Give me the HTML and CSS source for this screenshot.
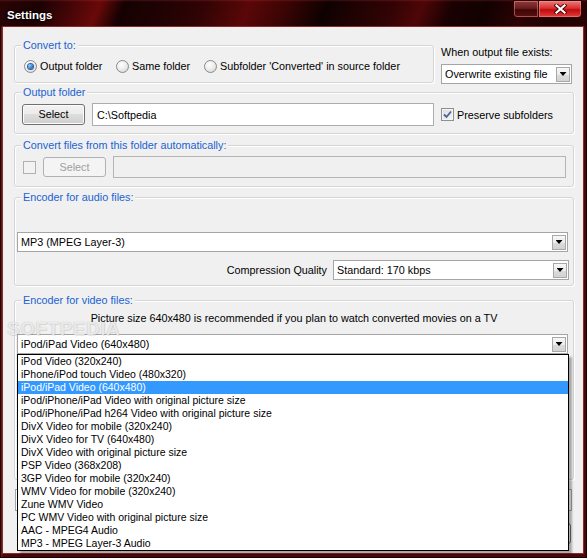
FILE: index.html
```html
<!DOCTYPE html>
<html>
<head>
<meta charset="utf-8">
<title>Settings</title>
<link rel="stylesheet" href="styles.css">
</head>
<body>
<div class="window">
  <div class="titlebar">
    <span class="title">Settings</span>
    <div class="caption-btns">
      <span class="cbtn cbtn-dark"></span>
      <span class="cbtn cbtn-close">
        <svg width="13" height="10" viewBox="0 0 13 10">
          <path d="M2.5 1.5 L10.5 8.5 M10.5 1.5 L2.5 8.5" stroke="#4a0000" stroke-width="4" stroke-linecap="square"/>
          <path d="M2.5 1.5 L10.5 8.5 M10.5 1.5 L2.5 8.5" stroke="#ffffff" stroke-width="2.2" stroke-linecap="square"/>
        </svg>
      </span>
    </div>
  </div>
  <div class="client">
    <div class="row1">
      <div class="group g1">
        <div class="gtitle">Convert to:</div>
        <div class="radios">
          <label class="ritem r1"><span class="radio on"></span>Output folder</label>
          <label class="ritem r2"><span class="radio"></span>Same folder</label>
          <label class="ritem"><span class="radio"></span>Subfolder 'Converted' in source folder</label>
        </div>
      </div>
      <div class="exists">
        <div class="lbl">When output file exists:</div>
        <div class="combo combo-exists"><span class="ctext">Overwrite existing file</span><span class="dd"><i class="tri"></i></span></div>
      </div>
    </div>

    <div class="group g2">
      <div class="gtitle">Output folder</div>
      <div class="frow frow2">
        <span class="btn btn-sel">Select</span>
        <span class="tb tb-out">C:\Softpedia</span>
        <span class="chk on"><svg width="9" height="9" viewBox="0 0 9 9"><path d="M1 4.5 L3.5 7 L8 1.5" fill="none" stroke="#4b6396" stroke-width="1.8"/></svg></span>
        <span class="chk-lbl">Preserve subfolders</span>
      </div>
    </div>

    <div class="group g3">
      <div class="gtitle">Convert files from this folder automatically:</div>
      <div class="frow frow3">
        <span class="chk dis"></span>
        <span class="btn btn-dis">Select</span>
        <span class="tb tb-dis"></span>
      </div>
    </div>

    <div class="group g4">
      <div class="gtitle">Encoder for audio files:</div>
      <div class="combo combo-wide combo-mp3"><span class="ctext">MP3 (MPEG Layer-3)</span><span class="dd"><i class="tri"></i></span></div>
      <div class="qrow">
        <span class="qlbl">Compression Quality</span>
        <div class="combo combo-q"><span class="ctext">Standard: 170 kbps</span><span class="dd"><i class="tri"></i></span></div>
      </div>
    </div>

    <div class="group g5">
      <div class="gtitle">Encoder for video files:</div>
      <div class="desc">Picture size 640x480 is recommended if you plan to watch converted movies on a TV</div>
      <div class="combo combo-wide combo-video"><span class="ctext">iPod/iPad Video (640x480)</span><span class="dd"><i class="tri"></i></span></div>
    </div>

    <div class="combo hidden-combo"><span class="ctext"></span></div>
    <div class="bottom-row">
      <span class="lang-edge"></span>
      <span class="btn btn-ok"></span>
    </div>

    <div class="watermark">SOFTPEDIA</div>

    <ul class="dlist">
      <li>iPod Video (320x240)</li>
      <li>iPhone/iPod touch Video (480x320)</li>
      <li class="sel">iPod/iPad Video (640x480)</li>
      <li>iPod/iPhone/iPad Video with original picture size</li>
      <li>iPod/iPhone/iPad h264 Video with original picture size</li>
      <li>DivX Video for mobile (320x240)</li>
      <li>DivX Video for TV (640x480)</li>
      <li>DivX Video with original picture size</li>
      <li>PSP Video (368x208)</li>
      <li>3GP Video for mobile (320x240)</li>
      <li>WMV Video for mobile (320x240)</li>
      <li>Zune WMV Video</li>
      <li>PC WMV Video with original picture size</li>
      <li>AAC - MPEG4 Audio</li>
      <li>MP3 - MPEG Layer-3 Audio</li>
    </ul>
  </div>
</div>
</body>
</html>
```
FILE: styles.css
```css
* { box-sizing: border-box; }
html, body { margin: 0; padding: 0; }
body {
  font-family: "Liberation Sans", Arial, sans-serif;
  font-size: 10.8px;
  color: #000;
  background: #000;
}
.window {
  width: 587px;
  height: 558px;
  display: flex;
  flex-direction: column;
  background: linear-gradient(90deg, #2a0304 0px, #7a1515 1px, #4a0707 3px, #4a0707 100%);
  box-shadow: inset 0 0 0 1px #1a0000;
  overflow: hidden;
}
.titlebar {
  height: 27px;
  flex: none;
  display: flex;
  background:
    linear-gradient(180deg, rgba(255,80,80,0.18) 0px, rgba(0,0,0,0) 2px),
    linear-gradient(112deg,
      #2a0405 0%, #1c0203 7%, #420506 12%, #6a0909 17%, #150102 21%,
      #1f0203 27%, #2f0304 34%, #5a0707 42%, #3d0404 48%, #0f0101 55%,
      #1c0203 59%, #320304 66%, #4e0607 71%, #1a0102 76%, #120101 82%,
      #2c0304 88%, #1e0203 94%, #2a0304 100%);
}
.title {
  color: #fff;
  font-weight: bold;
  font-size: 11.5px;
  padding: 9px 0 0 7px;
  line-height: 13px;
  text-shadow: 0 0 3px rgba(0,0,0,0.9), 0 0 1px #000;
}
.caption-btns {
  margin-left: auto;
  margin-right: 5px;
  display: flex;
  align-self: flex-start;
  height: 18px;
}
.cbtn {
  display: flex;
  align-items: center;
  justify-content: center;
  height: 18px;
  border: 1px solid #2e0000;
  box-shadow: inset 0 0 0 1px rgba(255,160,160,0.45);
}
.cbtn-dark {
  width: 25px;
  border-radius: 0 0 0 4px;
  border-right: none;
  background: linear-gradient(180deg, #8e3a3a 0%, #6a1e1e 45%, #3e0606 55%, #5a1010 100%);
}
.cbtn-close {
  width: 44px;
  border-radius: 0 0 4px 0;
  background: linear-gradient(180deg, #ee7a7a 0%, #d83030 45%, #c00a0a 55%, #e04040 100%);
}
.client {
  margin: 0 4px 0 3px;
  height: 526px;
  flex: none;
  background: #f0f0f0;
  position: relative;
  padding-top: 18px;
  display: flex;
  flex-direction: column;
  box-shadow: 0 0 0 1px #8a2a2a;
}
.group {
  border: 1px solid #d5d5d5;
  border-radius: 3px;
  box-shadow: inset 1px 1px 0 #fff, 1px 1px 0 #fff;
  display: flex;
  flex-direction: column;
  margin-left: 11px;
  width: 560px;
  flex: none;
}
.gtitle {
  align-self: flex-start;
  margin: -7px 0 0 6px;
  padding: 0 2px;
  background: #f0f0f0;
  color: #1a62d2;
  line-height: 13px;
  height: 13px;
  white-space: nowrap;
}
.row1 {
  display: flex;
  align-items: flex-start;
  height: 39px;
  flex: none;
}
.g1 { width: 420px; height: 38px; }
.radios {
  display: flex;
  align-items: center;
  margin-top: 8px;
  padding-left: 9px;
  height: 13px;
}
.ritem {
  display: flex;
  align-items: center;
  gap: 3px;
  line-height: 13px;
  white-space: nowrap;
}
.r1 { width: 92px; }
.r2 { width: 88px; }
.radio {
  width: 13px;
  height: 13px;
  border-radius: 50%;
  border: 1px solid #8a8a8a;
  background: radial-gradient(circle at 40% 35%, #ffffff 0%, #f0f0f0 40%, #cfcfcf 100%);
  flex: none;
  display: flex;
  align-items: center;
  justify-content: center;
}
.radio.on::after {
  content: "";
  width: 5px;
  height: 5px;
  border-radius: 50%;
  background: radial-gradient(circle at 35% 35%, #9ad0ff 0%, #2d73c9 60%, #153f86 100%);
  box-shadow: 0 0 0 1px #2b5fa3;
}
.exists {
  margin-left: 7px;
  display: flex;
  flex-direction: column;
}
.lbl {
  margin-top: 1px;
  line-height: 13px;
  height: 13px;
  white-space: nowrap;
}
.combo {
  display: flex;
  align-items: center;
  height: 20px;
  border: 1px solid #a5a5a5;
  background: #fff;
  padding-left: 3px;
  flex: none;
}
.ctext { flex: 1; white-space: nowrap; overflow: hidden; line-height: 13px; }
.dd {
  width: 14px;
  height: 15px;
  margin-right: 1px;
  border: 1px solid #a8a8a8;
  background: linear-gradient(180deg, #f7f7f7 0%, #ececec 50%, #dcdcdc 51%, #d2d2d2 100%);
  display: flex;
  align-items: center;
  justify-content: center;
  flex: none;
}
.tri {
  display: block;
  width: 7px;
  height: 4px;
  background: #000;
  clip-path: polygon(0 0, 100% 0, 50% 100%);
}
.combo-exists { margin-top: 5px; width: 131px; }

.g2 { margin-top: 8px; height: 42px; }
.frow {
  display: flex;
  align-items: center;
  flex: none;
}
.frow2 { margin-top: 4px; padding-left: 7px; height: 23px; }
.btn {
  display: flex;
  align-items: center;
  justify-content: center;
  width: 63px;
  border: 1px solid #707070;
  border-radius: 3px;
  background: linear-gradient(180deg, #f2f2f2 0%, #ebebeb 49%, #dddddd 50%, #cfcfcf 100%);
  box-shadow: inset 0 0 0 1px #fcfcfc;
  flex: none;
  line-height: 13px;
}
.btn-sel { height: 21px; }
.tb {
  display: flex;
  align-items: center;
  border: 1px solid #abadb3;
  background: #fff;
  padding-left: 4px;
  flex: none;
  white-space: nowrap;
}
.tb-out { width: 342px; height: 23px; margin-left: 7px; }
.chk {
  width: 13px;
  height: 13px;
  border: 1px solid #8e8f8f;
  background: linear-gradient(135deg, #dcdcdc 0%, #f6f6f6 100%);
  box-shadow: inset 0 0 0 1px #f4f4f4;
  display: flex;
  align-items: center;
  justify-content: center;
  flex: none;
}
.frow2 .chk { margin-left: 7px; }
.chk-lbl { margin-left: 3px; white-space: nowrap; }
.chk.dis { border-color: #b0b0b0; background: #f2f2f2; }

.g3 { margin-top: 11px; height: 42px; }
.frow3 { margin-top: 4px; padding-left: 8px; height: 22px; }
.btn-dis {
  height: 20px;
  margin-left: 7px;
  border-color: #adb2b5;
  background: #f4f4f4;
  box-shadow: none;
  color: #a0a0a0;
}
.tb-dis { width: 453px; height: 22px; margin-left: 7px; background: #f0f0f0; border-color: #b5b5b5; }

.g4 { margin-top: 10px; height: 89px; }
.combo-wide { width: 551px; margin-left: 2px; }
.combo-mp3 { margin-top: 28px; }
.qrow {
  display: flex;
  align-items: center;
  justify-content: flex-end;
  margin-top: 8px;
  margin-right: 4px;
  height: 20px;
  gap: 6px;
}
.combo-q { width: 236px; }

.g5 { margin-top: 14px; height: 180px; }
.desc {
  margin-top: 5px;
  text-align: center;
  line-height: 13px;
  height: 13px;
}
.combo-video { margin-top: 9px; }

.hidden-combo { margin: 9px 0 0 12px; width: 557px; height: 22px; }
.bottom-row {
  display: flex;
  align-items: center;
  margin: 12px 12px 0 12px;
  height: 21px;
}
.lang-edge { width: 2px; height: 9px; margin-left: 2px; background: #555; }
.btn-ok { margin-left: auto; height: 21px; width: 75px; }

.dlist {
  position: absolute;
  left: 14px;
  top: 327px;
  width: 552px;
  height: 197px;
  margin: 0;
  padding: 0;
  list-style: none;
  background: #fff;
  border: 1px solid #000;
  box-shadow: 3px 3px 2px rgba(0,0,0,0.3);
  font-size: 10.5px;
}
.dlist li {
  height: 13px;
  line-height: 13px;
  padding-left: 3px;
  white-space: nowrap;
}
.dlist li.sel { background: #3399ff; color: #fff; }

.watermark {
  position: absolute;
  left: 4px;
  top: 292px;
  font-size: 19px;
  line-height: 19px;
  font-weight: bold;
  letter-spacing: 0.5px;
  color: rgba(255,255,255,0.75);
  text-shadow: 0 0 1px rgba(0,0,0,0.3), 1px 1px 0 rgba(0,0,0,0.06);
}
```
